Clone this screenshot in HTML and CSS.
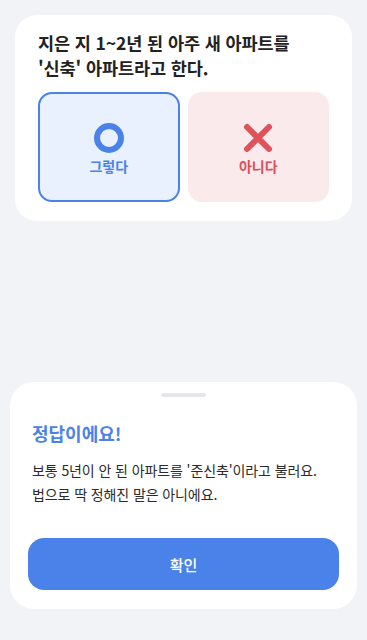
FILE: index.html
```html
<!DOCTYPE html>
<html lang="ko">
<head>
<meta charset="utf-8">
<link rel="stylesheet" href="styles.css">
</head>
<body>
<div class="screen">
  <section class="quiz-card">
    <h1 class="question">지은 지 1~2년 된 아주 새 아파트를<br>'신축' 아파트라고 한다.</h1>
    <div class="choices">
      <button class="choice choice-yes">
        <svg class="icon" width="32" height="32" viewBox="0 0 32 32"><circle cx="16" cy="16" r="12" fill="none" stroke="#4a82e8" stroke-width="6"/></svg>
        <span class="label">그렇다</span>
      </button>
      <button class="choice choice-no">
        <svg class="icon" width="32" height="32" viewBox="0 0 32 32"><path d="M5 5 L27 27 M27 5 L5 27" stroke="#e0525a" stroke-width="6" stroke-linecap="round"/></svg>
        <span class="label">아니다</span>
      </button>
    </div>
  </section>
  <div class="spacer"></div>
  <section class="sheet">
    <div class="handle"></div>
    <h2 class="result">정답이에요!</h2>
    <p class="explain">보통 5년이 안 된 아파트를 '준신축'이라고 불러요.<br>법으로 딱 정해진 말은 아니에요.</p>
    <button class="confirm">확인</button>
  </section>
</div>
</body>
</html>
```
FILE: styles.css
```css
* { box-sizing: border-box; margin: 0; padding: 0; }
html, body { width: 367px; height: 640px; }
body {
  background: #f2f3f6;
  font-family: "Noto Sans CJK KR", "Noto Sans", sans-serif;
  color: #222;
}
.screen {
  display: flex;
  flex-direction: column;
  height: 640px;
  padding: 15px 15px 31px 10px;
}
.quiz-card {
  background: #fff;
  border-radius: 22px;
  margin-left: 5px;
  padding: 15px 23px 19px;
}
.question {
  font-size: 17.5px;
  font-weight: 700;
  line-height: 25px;
  letter-spacing: -0.1px;
  color: #222;
}
.choices {
  display: grid;
  grid-template-columns: 1fr 1fr;
  gap: 8px;
  margin-top: 12px;
}
.choice {
  height: 110px;
  border-radius: 14px;
  border: none;
  display: flex;
  flex-direction: column;
  align-items: center;
  justify-content: center;
  font-family: inherit;
  padding-top: 4px;
}
.choice-yes {
  background: #e8f1fd;
  border: 2.5px solid #4a82e8;
}
.choice-no { background: #fbeaec; }
.icon { display: block; }
.label {
  font-size: 14px;
  font-weight: 700;
  margin-top: 2px;
}
.choice-yes .label { color: #4a82e8; }
.choice-no .label { color: #d9505a; }
.spacer { flex: 1; }
.sheet {
  background: #fff;
  border-radius: 24px;
  width: 347px;
  padding: 11px 18px 19px;
  display: flex;
  flex-direction: column;
}
.handle {
  width: 45px;
  height: 4px;
  border-radius: 2px;
  background: #e5e6ea;
  align-self: center;
}
.result {
  font-size: 18px;
  font-weight: 700;
  color: #4a82e8;
  margin: 23px 4px 0;
  line-height: 26px;
}
.explain {
  font-size: 14px;
  line-height: 24px;
  letter-spacing: -0.1px;
  margin: 12px 4px 0;
  color: #2a2a2a;
}
.confirm {
  margin-top: 32px;
  height: 52px;
  border: none;
  border-radius: 16px;
  background: #4a82ea;
  color: #fff;
  font-family: inherit;
  font-size: 15px;
  font-weight: 500;
}
```
